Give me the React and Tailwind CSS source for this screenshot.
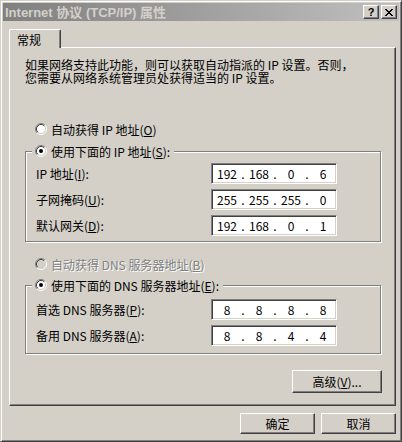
import React from 'react';

const Radio = ({ checked, disabled }) => (
    <svg width="12" height="12" viewBox="0 0 12 12" className="shrink-0">
        <circle cx="6" cy="6" r="4.5" fill={disabled ? '#d4d0c8' : '#fff'} />
        <path d="M2.11 9.89 A5.5 5.5 0 0 1 9.89 2.11" fill="none" stroke="#808080" strokeWidth="1" />
        <path d="M9.89 2.11 A5.5 5.5 0 0 1 2.11 9.89" fill="none" stroke="#fff" strokeWidth="1" />
        <path d="M2.82 9.18 A4.5 4.5 0 0 1 9.18 2.82" fill="none" stroke="#404040" strokeWidth="1" />
        <path d="M9.18 2.82 A4.5 4.5 0 0 1 2.82 9.18" fill="none" stroke="#d4d0c8" strokeWidth="1" />
        {checked && <circle cx="6" cy="6" r="2" fill="#000" />}
    </svg>
);

const IpBox = ({ parts }) => (
    <div className="w-[126px] h-[21px] bg-white border border-t-[#808080] border-l-[#808080] border-r-white border-b-white shadow-[inset_1px_1px_0_#404040,inset_-1px_-1px_0_#d4d0c8] flex items-center pl-[2px] leading-[13px]">
        {parts.map((p, i) => (
            <React.Fragment key={i}>
                {i > 0 && <span className="w-[6px] text-center">.</span>}
                <span className="w-[26px] text-center">{p}</span>
            </React.Fragment>
        ))}
    </div>
);

const Row = ({ label, parts }) => (
    <div className="flex items-center">
        <span className="w-[175px]">{label}</span>
        <IpBox parts={parts} />
    </div>
);

const Button = ({ className, children }) => (
    <button className={`bg-[#d4d0c8] border border-t-white border-l-white border-r-[#404040] border-b-[#404040] shadow-[inset_-1px_-1px_0_#808080] flex items-center justify-center ${className}`}>
        {children}
    </button>
);

const Group = ({ legend, rows, pt, pb }) => (
    <fieldset className="w-[356px] border border-[#808080] shadow-[inset_1px_1px_0_#fff,1px_1px_0_#fff] p-0">
        <legend className="ml-[6px] pl-[3px] pr-[4px] h-[16px] flex items-center gap-[4px] bg-[#d4d0c8]">
            <Radio checked />
            <span>{legend}</span>
        </legend>
        <div className={`pl-[10px] flex flex-col gap-[5px] ${pt} ${pb}`}>
            {rows.map((r, i) => (
                <Row key={i} label={r.label} parts={r.parts} />
            ))}
        </div>
    </fieldset>
);

const App = () => {
    return (
        <div className="w-[402px] h-[442px] bg-[#d4d0c8] border border-t-[#d4d0c8] border-l-[#d4d0c8] border-r-[#404040] border-b-[#404040] shadow-[inset_1px_1px_0_#fff,inset_-1px_-1px_0_#808080] p-[2px] flex flex-col font-['Noto_Sans_CJK_SC',sans-serif] text-[12px] text-black leading-[13px]">
            {/* title bar */}
            <div className="h-[18px] shrink-0 bg-gradient-to-r from-[#808080] to-[#c0c0c0] flex items-center justify-between pl-[2px] pr-[2px]">
                <span className="font-['Liberation_Sans','Noto_Sans_CJK_SC',sans-serif] font-bold text-[13px] leading-[15px] text-[#d4d0c8] whitespace-nowrap">
                    Internet 协议 (TCP/IP) 属性
                </span>
                <div className="flex items-center gap-[2px]">
                    <Button className="w-[16px] h-[14px] p-0">
                        <span className="font-['Liberation_Sans',sans-serif] font-bold text-[11px] leading-[11px]">?</span>
                    </Button>
                    <Button className="w-[16px] h-[14px] p-0">
                        <svg width="8" height="7" viewBox="0 0 8 7" shapeRendering="crispEdges">
                            <path d="M0 0h2v1h-2zM6 0h2v1h-2zM1 1h2v1h-2zM5 1h2v1h-2zM2 2h4v1h-4zM3 3h2v1h-2zM2 4h4v1h-4zM1 5h2v1h-2zM5 5h2v1h-2zM0 6h2v1h-2zM6 6h2v1h-2z" fill="#000" />
                        </svg>
                    </Button>
                </div>
            </div>

            {/* tab */}
            <div className="mt-[8px] ml-[6px] flex">
                <div className="relative z-10 w-[52px] h-[19px] -mb-[1px] bg-[#d4d0c8] border-t border-l border-r border-t-white border-l-white border-r-[#404040] shadow-[inset_-1px_0_0_#808080] rounded-t-[2px] flex items-center pl-[7px]">
                    常规
                </div>
            </div>

            {/* panel */}
            <div className="ml-[6px] w-[387px] h-[359px] shrink-0 border border-t-white border-l-white border-r-[#404040] border-b-[#404040] shadow-[inset_-1px_-1px_0_#808080] pt-[10px] pl-[15px] flex flex-col">
                <div className="h-[13px] whitespace-nowrap">如果网络支持此功能，则可以获取自动指派的 IP 设置。否则，</div>
                <div className="h-[13px] whitespace-nowrap">您需要从网络系统管理员处获得适当的 IP 设置。</div>

                <div className="mt-[37px] ml-[10px] h-[16px] flex items-center gap-[4px]">
                    <Radio />
                    <span>自动获得 IP 地址(<u>O</u>)</span>
                </div>

                <div className="mt-[6px]">
                    <Group
                        legend={<>使用下面的 IP 地址(<u>S</u>):</>}
                        pt="pt-[4px]"
                        pb="pb-[5px]"
                        rows={[
                            { label: <>IP 地址(<u>I</u>):</>, parts: ['192', '168', '0', '6'] },
                            { label: <>子网掩码(<u>U</u>):</>, parts: ['255', '255', '255', '0'] },
                            { label: <>默认网关(<u>D</u>):</>, parts: ['192', '168', '0', '1'] },
                        ]}
                    />
                </div>

                <div className="mt-[14px] ml-[10px] h-[16px] flex items-center gap-[4px] text-[#808080] [text-shadow:1px_1px_0_#fff]">
                    <Radio disabled />
                    <span>自动获得 DNS 服务器地址(<u>B</u>)</span>
                </div>

                <div className="mt-[5px]">
                    <Group
                        legend={<>使用下面的 DNS 服务器地址(<u>E</u>):</>}
                        pt="pt-[6px]"
                        pb="pb-[7px]"
                        rows={[
                            { label: <>首选 DNS 服务器(<u>P</u>):</>, parts: ['8', '8', '8', '8'] },
                            { label: <>备用 DNS 服务器(<u>A</u>):</>, parts: ['8', '8', '4', '4'] },
                        ]}
                    />
                </div>

                <div className="mt-[16px] w-[357px] flex justify-end">
                    <Button className="w-[90px] h-[23px]">
                        高级(<u>V</u>)...
                    </Button>
                </div>
            </div>

            {/* bottom buttons */}
            <div className="mt-[7px] mr-[3px] flex justify-end gap-[6px]">
                <Button className="w-[75px] h-[21px]">确定</Button>
                <Button className="w-[75px] h-[21px]">取消</Button>
            </div>
        </div>
    );
};

export default App;
